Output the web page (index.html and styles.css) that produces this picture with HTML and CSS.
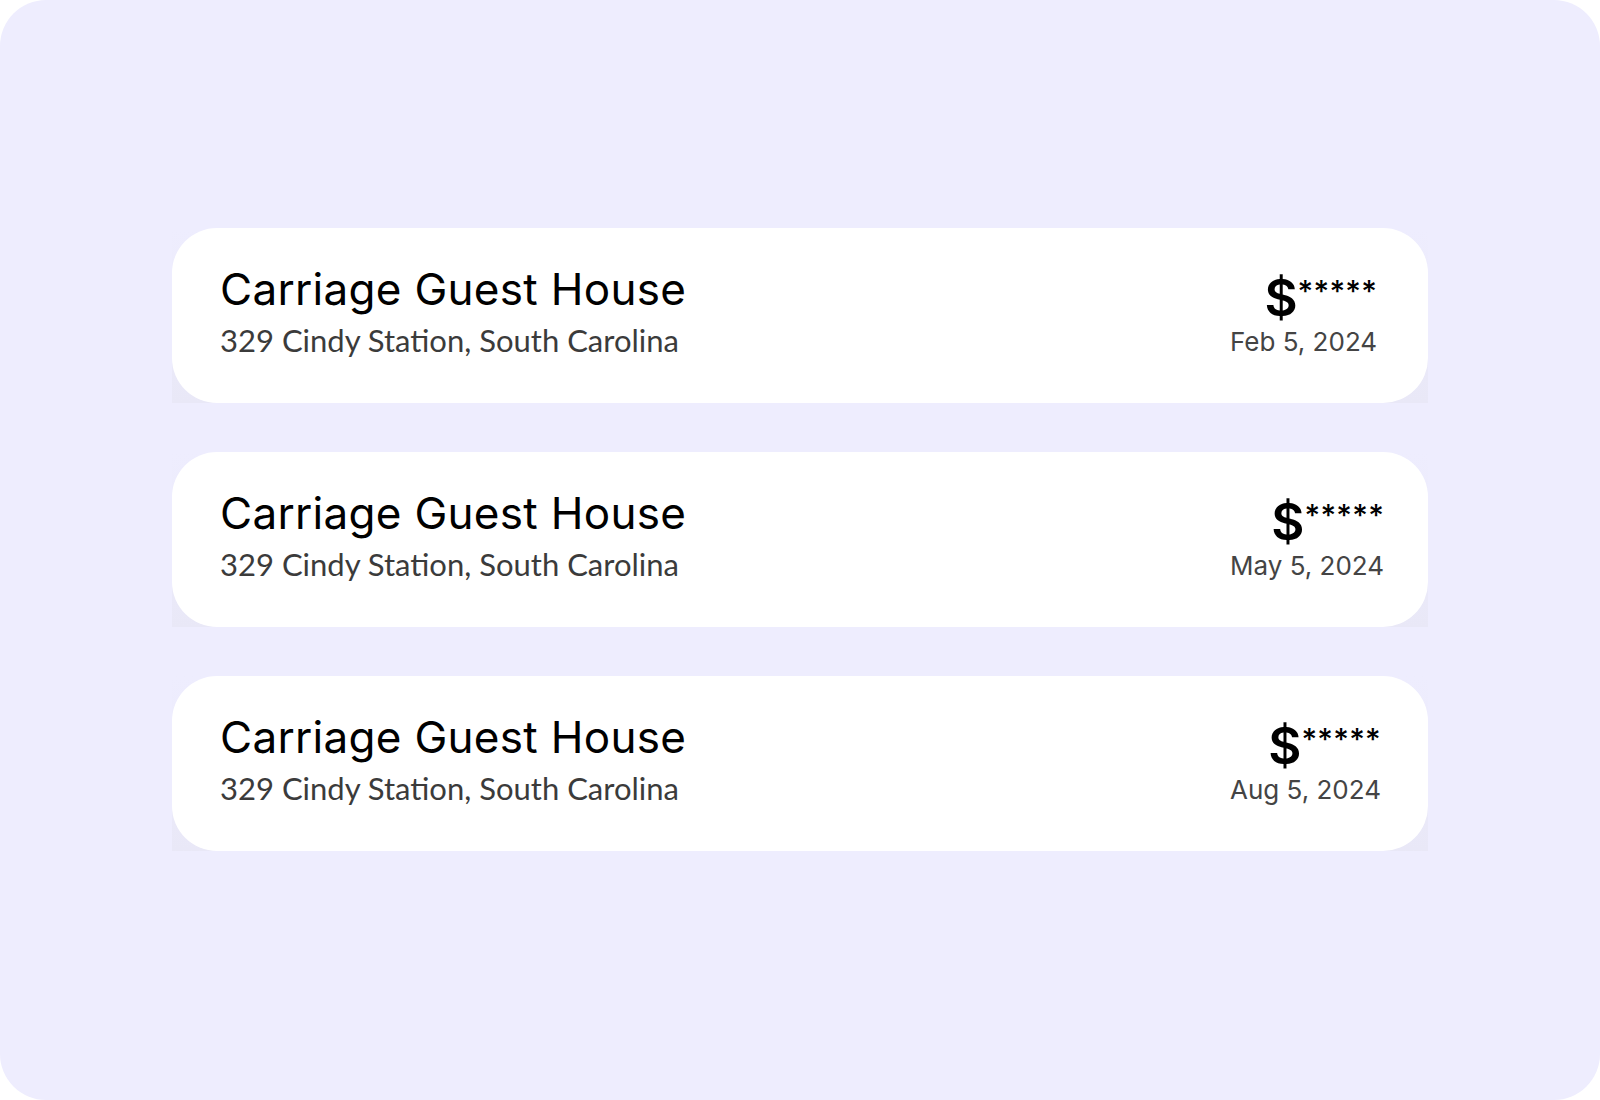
FILE: index.html
```html
<!DOCTYPE html>
<html lang="en">
<head>
<meta charset="utf-8">
<title>Bookings</title>
<link rel="stylesheet" href="styles.css">
</head>
<body>
<main class="panel">
  <ul class="list">
    <li class="item">
      <div class="card">
        <div class="info">
          <h2 class="title">Carriage Guest House</h2>
          <p class="address">329 Cindy Station, South Carolina</p>
        </div>
        <div class="meta">
          <div class="price"><span class="cur">$</span><span class="stars">*****</span></div>
          <div class="date">Feb 5, 2024</div>
        </div>
      </div>
    </li>
    <li class="item">
      <div class="card">
        <div class="info">
          <h2 class="title">Carriage Guest House</h2>
          <p class="address">329 Cindy Station, South Carolina</p>
        </div>
        <div class="meta">
          <div class="price"><span class="cur">$</span><span class="stars">*****</span></div>
          <div class="date">May 5, 2024</div>
        </div>
      </div>
    </li>
    <li class="item">
      <div class="card">
        <div class="info">
          <h2 class="title">Carriage Guest House</h2>
          <p class="address">329 Cindy Station, South Carolina</p>
        </div>
        <div class="meta">
          <div class="price"><span class="cur">$</span><span class="stars">*****</span></div>
          <div class="date">Aug 5, 2024</div>
        </div>
      </div>
    </li>
  </ul>
</main>
</body>
</html>
```

FILE: styles.css
```css
html, body {
  margin: 0;
  padding: 0;
  background: #ffffff;
}

.panel {
  width: 1600px;
  height: 1100px;
  box-sizing: border-box;
  background: #eeedfe;
  border-radius: 46px;
  padding: 228px 172px 0 172px;
}

.list {
  list-style: none;
  margin: 0;
  padding: 0;
  display: flex;
  flex-direction: column;
  gap: 49px;
}

.item {
  background: linear-gradient(to bottom, rgba(234, 233, 248, 0) 0%, rgba(234, 233, 248, 0.6) 55%, #e9e8f7 100%);
}

.card {
  height: 175px;
  box-sizing: border-box;
  background: #ffffff;
  border-radius: 45px;
  padding: 35px 0 0 48px;
  display: flex;
  align-items: flex-start;
}

.info {
  flex: 0 0 1010px;
}

.title {
  margin: 0;
  font-family: Inter, "Liberation Sans", sans-serif;
  font-weight: 400;
  font-size: 44px;
  line-height: 52px;
  color: #000000;
  letter-spacing: 0.3px;
}

.address {
  margin: 6px 0 0 0;
  font-family: Lato, "Liberation Sans", sans-serif;
  font-size: 31px;
  line-height: 38px;
  color: #3b3b3b;
}

.meta {
  display: flex;
  flex-direction: column;
  align-items: flex-end;
  padding-top: 9px;
}

.price {
  display: flex;
  align-items: flex-start;
  font-family: Inter, "Liberation Sans", sans-serif;
  color: #000000;
  line-height: 1;
}

.cur {
  font-size: 51px;
  font-weight: 600;
}

.stars {
  font-size: 30px;
  font-weight: 500;
  margin-top: 4px;
  letter-spacing: 0.3px;
}

.date {
  margin-top: 3px;
  font-family: Inter, "Liberation Sans", sans-serif;
  font-size: 26px;
  line-height: 32px;
  color: #444444;
}
```
